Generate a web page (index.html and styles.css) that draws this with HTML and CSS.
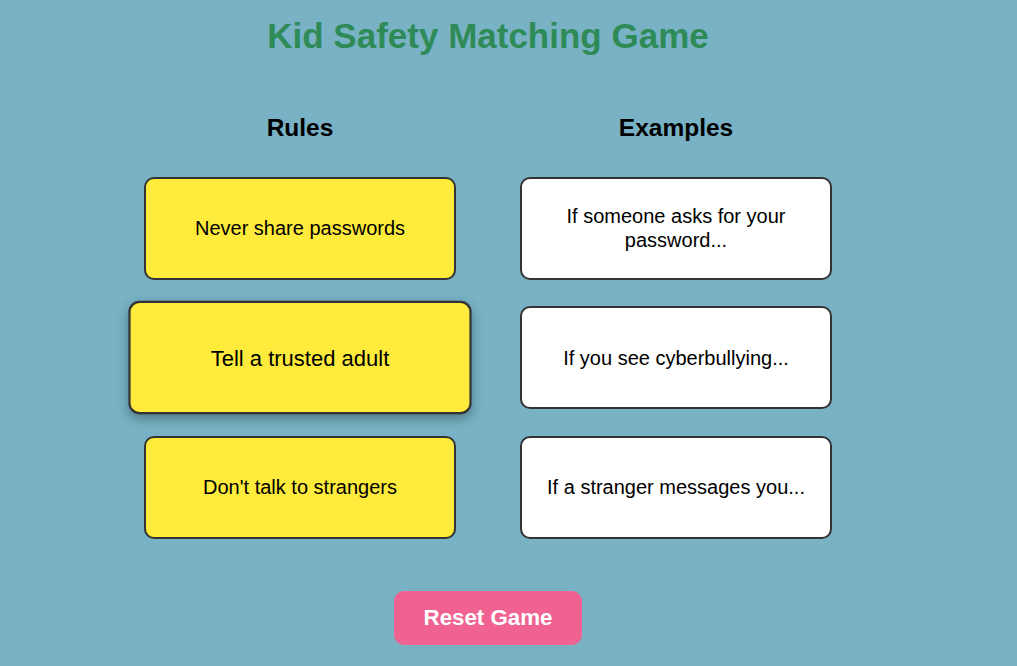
FILE: index.html
```html
<!DOCTYPE html>
<html lang="en">
<head>
<meta charset="utf-8">
<title>Kid Safety Matching Game</title>
<link rel="stylesheet" href="styles.css">
</head>
<body>
<div class="page">
  <h1 class="title">Kid Safety Matching Game</h1>
  <div class="board">
    <div class="column">
      <h2 class="column-title">Rules</h2>
      <div class="card card-rule">Never share passwords</div>
      <div class="card card-rule card-active">Tell a trusted adult</div>
      <div class="card card-rule">Don't talk to strangers</div>
    </div>
    <div class="column">
      <h2 class="column-title">Examples</h2>
      <div class="card card-example">If someone asks for your password...</div>
      <div class="card card-example">If you see cyberbullying...</div>
      <div class="card card-example">If a stranger messages you...</div>
    </div>
  </div>
  <div class="actions">
    <button class="reset-btn" type="button">Reset Game</button>
  </div>
</div>
</body>
</html>
```

FILE: styles.css
```css
html, body {
  height: 100%;
}
body {
  margin: 8px;
  background: #78b2c4;
  font-family: "Liberation Sans", Arial, sans-serif;
  color: #000;
}
.page {
  width: 960px;
}
.title {
  margin: 8px 0 0;
  text-align: center;
  font-size: 35px;
  font-weight: bold;
  color: #2e8b57;
  line-height: 40px;
}
.board {
  display: flex;
  justify-content: center;
  gap: 64px;
  margin-top: 58px;
}
.column {
  width: 312px;
  display: flex;
  flex-direction: column;
  align-items: center;
  gap: 26.5px;
}
.column-title {
  margin: 0 0 8px;
  font-size: 24.5px;
  font-weight: bold;
  line-height: 28px;
}
.card {
  box-sizing: border-box;
  width: 312px;
  height: 103px;
  padding: 0 24px;
  display: flex;
  align-items: center;
  justify-content: center;
  text-align: center;
  border: 2px solid #333;
  border-radius: 10px;
  font-size: 20px;
  line-height: 24px;
}
.card-rule {
  background: #ffeb3b;
}
.card-example {
  background: #fff;
}
.card-active {
  transform: scale(1.1);
  box-shadow: 0 4px 10px rgba(0, 0, 0, 0.3);
}
.actions {
  display: flex;
  justify-content: center;
  margin-top: 52px;
}
.reset-btn {
  width: 188px;
  height: 54px;
  border: none;
  border-radius: 10px;
  background: #f06292;
  color: #fff;
  font-family: "Liberation Sans", Arial, sans-serif;
  font-size: 22.3px;
  font-weight: bold;
}
```
